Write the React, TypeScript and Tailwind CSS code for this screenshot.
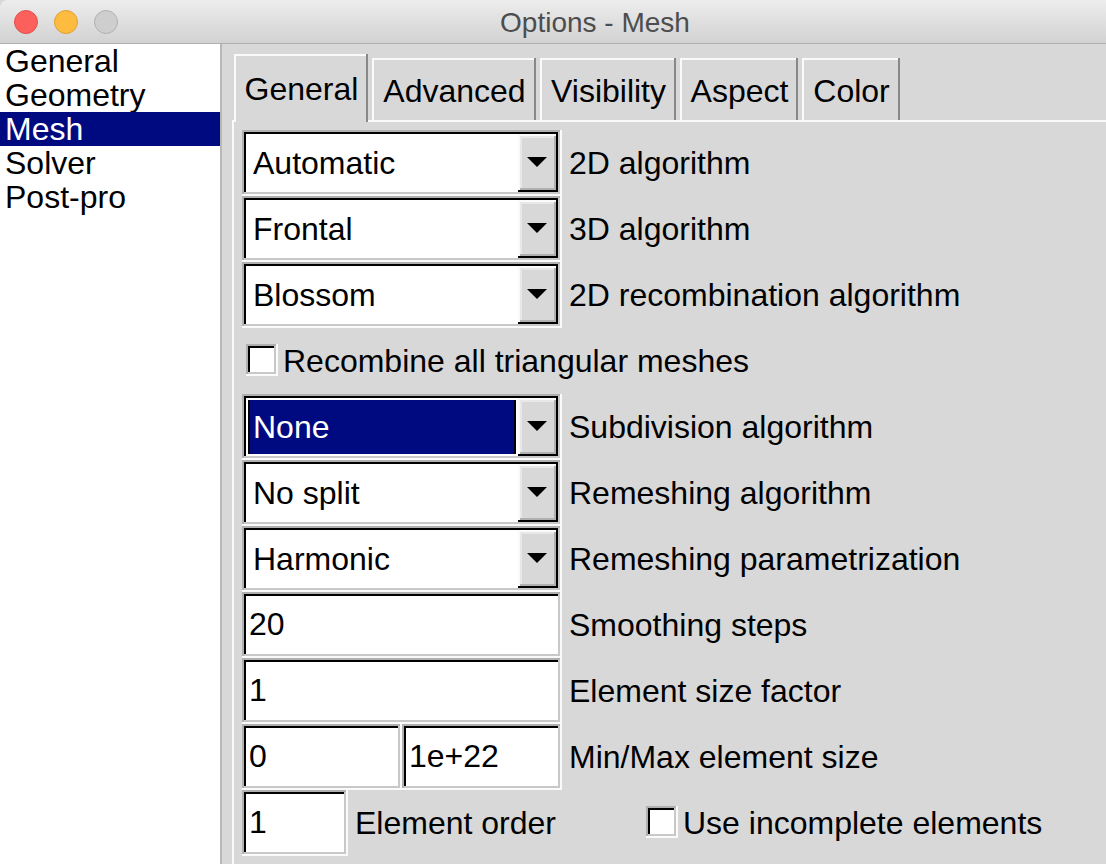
import { useState } from "react";

const categories = ["General", "Geometry", "Mesh", "Solver", "Post-pro"];

const tabs = [
  { name: "General", width: "w-[134px]" },
  { name: "Advanced", width: "w-[164px]" },
  { name: "Visibility", width: "w-[136px]" },
  { name: "Aspect", width: "w-[118px]" },
  { name: "Color", width: "w-[98px]" },
];

const sunken =
  "bg-white shadow-[inset_-2px_-2px_0_#fafafa,inset_2px_2px_0_#b0b0b0,inset_-4px_-4px_0_#c8c8c8,inset_4px_4px_0_#000000]";

const raised =
  "bg-[#d8d8d8] shadow-[inset_-2px_-2px_0_#000000,inset_2px_2px_0_#fafafa,inset_-4px_-4px_0_#b0b0b0,inset_4px_4px_0_#e8e8e8]";

function Choice({
  id,
  label,
  options,
  highlighted = false,
}: {
  id: string;
  label: string;
  options: string[];
  highlighted?: boolean;
}) {
  return (
    <div className="flex h-[66px] items-center gap-[7px]">
      <div className={`grid h-[66px] w-[320px] shrink-0 p-1 ${sunken}`}>
        <select
          id={id}
          className={`col-start-1 row-start-1 w-full appearance-none rounded-none border-2 border-r-[42px] border-white pl-[5px] outline-none ${
            highlighted
              ? "bg-[#000a80] text-white shadow-[inset_2px_0_0_#000000,inset_-2px_0_0_#000000]"
              : "bg-white text-black"
          }`}
        >
          {options.map((option) => (
            <option key={option}>{option}</option>
          ))}
        </select>
        <span
          className={`pointer-events-none col-start-1 row-start-1 flex w-10 items-center justify-center justify-self-end pr-0.5 pb-0.5 ${raised}`}
        >
          <svg width="20" height="10" viewBox="0 0 20 10" aria-hidden="true">
            <path d="M0 0H20L10 10Z" fill="#000" />
          </svg>
        </span>
      </div>
      <label htmlFor={id}>{label}</label>
    </div>
  );
}

function TextBox({
  id,
  value,
  width,
  label,
}: {
  id: string;
  value: string;
  width: string;
  label?: string;
}) {
  return (
    <input
      id={id}
      type="text"
      defaultValue={value}
      aria-label={label}
      className={`h-[66px] shrink-0 rounded-none pr-1.5 pb-0.5 pl-[7px] outline-none ${width} ${sunken}`}
    />
  );
}

function Check({ id, label }: { id: string; label: string }) {
  return (
    <div className="flex h-[66px] items-center gap-[5px]">
      <input
        id={id}
        type="checkbox"
        className={`mb-0.5 size-8 shrink-0 appearance-none rounded-none checked:bg-black ${sunken}`}
      />
      <label htmlFor={id}>{label}</label>
    </div>
  );
}

export default function App() {
  const [category, setCategory] = useState("Mesh");
  const [tab, setTab] = useState("General");

  return (
    <div className="flex min-h-screen flex-col overflow-hidden bg-[#d8d8d8] font-['Liberation_Sans',Arial,sans-serif] text-[32px] leading-[34px] whitespace-nowrap text-black">
      <header className="flex h-11 items-center rounded-tl-lg border-b border-[#b0b0b0] bg-linear-to-b from-[#ededed] to-[#d2d2d2] pl-3.5">
        <div className="flex gap-4">
          <button aria-label="Close" className="size-6 rounded-full border border-[#e2504c] bg-[#fc605c]" />
          <button aria-label="Minimize" className="size-6 rounded-full border border-[#e0a032] bg-[#fdbc40]" />
          <button aria-label="Zoom" className="size-6 rounded-full border border-[#b1b1b1] bg-[#cecece]" />
        </div>
        <h1 className="flex-1 pt-0.5 pr-[34px] text-center text-[28px] text-[#4d4d4d]">Options - Mesh</h1>
      </header>

      <div className="flex flex-1">
        <nav className="flex w-[222px] shrink-0 flex-col border-r-2 border-[#b8b8b8] bg-white">
          {categories.map((name) => (
            <button
              key={name}
              onClick={() => setCategory(name)}
              className={`h-[34px] pl-[5px] text-left ${
                name === category ? "bg-[#000a80] text-white" : "text-black"
              }`}
            >
              {name}
            </button>
          ))}
        </nav>

        <main className="flex min-w-0 flex-1 flex-col pt-2.5 pl-2.5">
          <div
            role="tablist"
            className="flex h-[68px] items-end gap-1 pl-0.5 shadow-[inset_0_-2px_0_#fafafa]"
          >
            {tabs.map(({ name, width }) => (
              <button
                key={name}
                role="tab"
                aria-selected={name === tab}
                onClick={() => setTab(name)}
                className={`bg-[#d8d8d8] pl-px shadow-[inset_-2px_0_0_#888888,inset_2px_2px_0_#fafafa] ${width} ${
                  name === tab ? "h-[68px] pt-0.5" : "mb-0.5 h-[62px] pt-1"
                }`}
              >
                {name}
              </button>
            ))}
          </div>

          <section role="tabpanel" className="flex-1 border-l-2 border-[#fafafa] pt-2 pl-2">
            <Choice id="algo2d" label="2D algorithm" options={["Automatic", "MeshAdapt", "Delaunay", "Frontal"]} />
            <Choice id="algo3d" label="3D algorithm" options={["Frontal", "Delaunay"]} />
            <Choice id="recombination" label="2D recombination algorithm" options={["Blossom", "Standard"]} />
            <div className="pl-1">
              <Check id="recombine-all" label="Recombine all triangular meshes" />
            </div>
            <Choice
              id="subdivision"
              label="Subdivision algorithm"
              options={["None", "All Quads", "All Hexas"]}
              highlighted
            />
            <Choice id="remeshing" label="Remeshing algorithm" options={["No split", "Automatic"]} />
            <Choice id="parametrization" label="Remeshing parametrization" options={["Harmonic", "Conformal"]} />
            <div className="flex items-center gap-[7px]">
              <TextBox id="smoothing" value="20" width="w-[320px]" />
              <label htmlFor="smoothing">Smoothing steps</label>
            </div>
            <div className="flex items-center gap-[7px]">
              <TextBox id="size-factor" value="1" width="w-[320px]" />
              <label htmlFor="size-factor">Element size factor</label>
            </div>
            <div className="flex items-center gap-[7px]">
              <div className="flex">
                <TextBox id="size-min" value="0" width="w-[160px]" />
                <TextBox id="size-max" value="1e+22" width="w-[160px]" label="Max element size" />
              </div>
              <label htmlFor="size-min">Min/Max element size</label>
            </div>
            <div className="flex items-center">
              <div className="flex w-[404px] items-center gap-[7px]">
                <TextBox id="order" value="1" width="w-[106px]" />
                <label htmlFor="order">Element order</label>
              </div>
              <Check id="incomplete" label="Use incomplete elements" />
            </div>
          </section>
        </main>
      </div>
    </div>
  );
}
